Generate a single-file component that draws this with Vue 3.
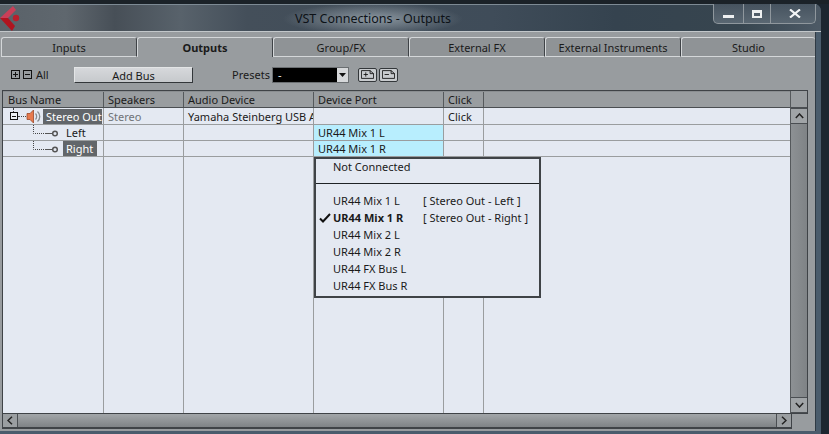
<script setup>
const tabs = ['Inputs', 'Outputs', 'Group/FX', 'External FX', 'External Instruments', 'Studio']
const headers = ['Bus Name', 'Speakers', 'Audio Device', 'Device Port', 'Click', '']
const ports = [
  { name: 'UR44 Mix 1 L', note: '[ Stereo Out - Left ]' },
  { name: 'UR44 Mix 1 R', note: '[ Stereo Out - Right ]', checked: true },
  { name: 'UR44 Mix 2 L' },
  { name: 'UR44 Mix 2 R' },
  { name: 'UR44 FX Bus L' },
  { name: 'UR44 FX Bus R' }
]
</script>

<template>
  <div class="window">
    <div class="topstrip"></div>
    <div class="frame">
      <header class="titlebar">
        <svg class="logo" width="22" height="27" viewBox="0 0 22 27">
          <path d="M0 13 L13 1 L16 5 L8 13 Z" fill="#c93f58" />
          <path d="M0 13 L8 13 L15 21 L12 26 Z" fill="#b0141f" />
          <circle cx="16" cy="13" r="3.2" fill="#b81f2c" />
        </svg>
        <span class="title">VST Connections - Outputs</span>
        <div class="controls">
          <div class="ctl"><i class="min"></i></div>
          <div class="ctl"><i class="max"></i></div>
          <div class="ctl last">
            <svg width="12" height="9" viewBox="0 0 12 9"><path d="M1 0.500 L11 8.500 M11 0.500 L1 8.500" stroke="#f2f4f5" stroke-width="2.200" /></svg>
          </div>
        </div>
      </header>

      <div class="body-row">
        <main class="panel">
          <nav class="tabs">
            <div v-for="t in tabs" :key="t" class="tab" :class="{ active: t === 'Outputs' }">{{ t }}</div>
          </nav>

          <div class="toolbar">
            <span class="sq"><svg width="7" height="7" viewBox="0 0 7 7"><path d="M1 3.500H6M3.500 1V6" stroke="#111" /></svg></span>
            <span class="sq"><svg width="7" height="7" viewBox="0 0 7 7"><path d="M1 3.500H6" stroke="#111" /></svg></span>
            <span class="all">All</span>
            <button class="addbus">Add Bus</button>
            <span class="presets">Presets</span>
            <div class="combo">
              <span class="combo-val">-</span>
              <span class="combo-arrow"><svg width="7" height="4" viewBox="0 0 7 4"><path d="M0 0H7L3.500 4Z" fill="#111" /></svg></span>
            </div>
            <span class="pbtn"><svg width="15" height="10" viewBox="0 0 15 10"><path d="M.5.5H10.500L14.500 4V9.500H.5ZM10.500 .5V4H14.500M3 5H8M5.500 2.500V7.500" fill="none" stroke="#111" /></svg></span>
            <span class="pbtn"><svg width="15" height="10" viewBox="0 0 15 10"><path d="M.5.5H10.500L14.500 4V9.500H.5ZM10.500 .5V4H14.500M3 5H8" fill="none" stroke="#111" /></svg></span>
          </div>

          <section class="table">
            <div class="table-main">
              <div class="table-area">
                <div class="row head">
                  <div v-for="h in headers" :key="h" class="cell">{{ h }}</div>
                </div>
                <div class="row first">
                  <div class="cell name">
                    <span class="tree-box"><i></i></span>
                    <span class="dots"></span>
                    <svg class="speaker" width="15" height="15" viewBox="0 0 15 15">
                      <path d="M1 4.500H4L7.500 1V14L4 10.500H1Z" fill="#e87a4e" stroke="#9c4a2a" stroke-width=".8" />
                      <path d="M9.500 4.500C11 6 11 9 9.500 10.500M11.500 2.500C14.500 5 14.500 10 11.500 12.500" fill="none" stroke="#868b8f" stroke-width="1.300" />
                    </svg>
                    <span class="chip stereo">Stereo Out</span>
                  </div>
                  <div class="cell muted">Stereo</div>
                  <div class="cell">Yamaha Steinberg USB A</div>
                  <div class="cell"></div>
                  <div class="cell">Click</div>
                  <div class="cell"></div>
                </div>
                <div class="row">
                  <div class="cell name child">
                    <svg class="conn" width="28" height="16" viewBox="0 0 28 16"><path d="M.5 0V8.500H12" fill="none" stroke="#444" stroke-dasharray="1 1" /><path d="M12 8.500H19" stroke="#555" /><circle cx="22" cy="8.500" r="2.300" fill="none" stroke="#555" stroke-width="1.500" /></svg>
                    <span class="leaf">Left</span>
                  </div>
                  <div class="cell"></div><div class="cell"></div>
                  <div class="cell port">UR44 Mix 1 L</div>
                  <div class="cell"></div><div class="cell"></div>
                </div>
                <div class="row">
                  <div class="cell name child">
                    <svg class="conn" width="28" height="16" viewBox="0 0 28 16"><path d="M.5 0V8.500H12" fill="none" stroke="#444" stroke-dasharray="1 1" /><path d="M12 8.500H19" stroke="#555" /><circle cx="22" cy="8.500" r="2.300" fill="none" stroke="#555" stroke-width="1.500" /></svg>
                    <span class="chip right">Right</span>
                  </div>
                  <div class="cell"></div><div class="cell"></div>
                  <div class="cell port">UR44 Mix 1 R</div>
                  <div class="cell"></div><div class="cell"></div>
                </div>
                <div class="row filler">
                  <div class="cell" v-for="n in 6" :key="n"></div>
                </div>

                <div class="menu">
                  <div class="menu-top">Not Connected</div>
                  <div class="menu-list">
                    <div v-for="p in ports" :key="p.name" class="menu-item" :class="{ on: p.checked }">
                      <svg v-if="p.checked" class="check" width="12" height="10" viewBox="0 0 12 10"><path d="M1 5.500L4 8.500L11 1" fill="none" stroke="#111" stroke-width="2" /></svg>
                      <span class="mname">{{ p.name }}</span>
                      <span v-if="p.note" class="mnote">{{ p.note }}</span>
                    </div>
                  </div>
                </div>
              </div>
              <div class="vscroll">
                <div class="vhead"></div>
                <div class="sbtn"><svg width="9" height="6" viewBox="0 0 9 6"><path d="M.8 5L4.500 1L8.200 5" fill="none" stroke="#222" stroke-width="1.500" /></svg></div>
                <div class="vtrack"></div>
                <div class="sbtn"><svg width="9" height="6" viewBox="0 0 9 6"><path d="M.8 1L4.500 5L8.200 1" fill="none" stroke="#222" stroke-width="1.500" /></svg></div>
              </div>
            </div>
            <div class="hscroll">
              <div class="hbtn"><svg width="6" height="9" viewBox="0 0 6 9"><path d="M5 .8L1 4.500L5 8.200" fill="none" stroke="#222" stroke-width="1.500" /></svg></div>
              <div class="htrack"></div>
              <div class="hbtn end"><svg width="6" height="9" viewBox="0 0 6 9"><path d="M1 .8L5 4.500L1 8.200" fill="none" stroke="#222" stroke-width="1.500" /></svg></div>
            </div>
          </section>
        </main>
        <div class="side"></div>
      </div>
    </div>
  </div>
</template>

<style>
html, body { margin: 0; background: #1c2630; overflow: hidden; }
</style>

<style scoped>
.window {
  width: 829px;
  height: 434px;
  display: flex;
  flex-direction: column;
  overflow: hidden;
  font-family: "Noto Sans", sans-serif;
  font-size: 11px;
  color: #1a1a1a;
  background: #1c2630;
}
.topstrip { height: 4px; background: #1b2228; flex: none; }
.frame {
  width: 821px;
  flex: 1;
  min-height: 0;
  display: flex;
  flex-direction: column;
  background: #4a5c6c;
  border-radius: 0 7px 0 0;
  overflow: hidden;
}
.titlebar {
  height: 28px;
  flex: none;
  position: relative;
  display: flex;
  align-items: center;
  justify-content: center;
  padding-right: 75px;
  box-sizing: border-box;
  background:
    radial-gradient(ellipse 90px 16px at 373px 14px, rgba(165, 176, 184, .75), rgba(165, 176, 184, 0) 100%),
    linear-gradient(90deg, #5a6269 0, #5f676e 8%, #474f57 14%, #58626b 22%, #444f5a 30%, #3f4c59 60%, #35434f 75%, #37454f 90%, #4d5a66 100%);
  border-top: 1px solid #7d8a94;
  border-bottom: 1px solid #c2c7ca;
}
.logo { position: absolute; left: 0; top: 0; }
.title { color: #0d1217; font-size: 12.5px; }
.controls {
  position: absolute;
  left: 713px;
  top: -1px;
  width: 103px;
  height: 20px;
  display: flex;
  border: 1px solid #8f979d;
  border-top: 0;
  border-radius: 0 0 5px 5px;
  box-sizing: border-box;
  background: linear-gradient(#46535f, #5a6772);
}
.ctl { flex: 1; display: flex; align-items: center; justify-content: center; border-right: 1px solid #8f979d; }
.ctl:first-child { flex: none; width: 29px; }
.ctl:nth-child(2) { flex: none; width: 26px; }
.ctl.last { border-right: 0; padding-left: 3px; }
.min { display: block; width: 11px; height: 3px; background: #eef0f1; margin-top: 6px; }
.max { display: block; width: 6px; height: 3px; border: 2px solid #eef0f1; border-top-width: 3px; }

.body-row { height: 399px; flex: none; display: flex; }
.panel {
  width: 815px;
  flex: none;
  display: flex;
  flex-direction: column;
  background: #989c9f;
  box-sizing: border-box;
  padding-bottom: 2px;
}
.side { flex: 1; border-left: 1px solid #2f3a44; }

.tabs { display: flex; padding: 5px 0 0 1px; height: 25px; box-sizing: border-box; flex: none; }
.tab {
  width: 136px;
  height: 20px;
  box-sizing: border-box;
  display: flex;
  align-items: center;
  justify-content: center;
  background: #8f9396;
  border-top: 1px solid #d4d7d9;
  border-left: 1px solid #d4d7d9;
  border-right: 1px solid #3f4347;
  border-bottom: 1px solid #d4d7d9;
  border-radius: 3px 3px 0 0;
}
.tab:last-child { width: 134px; border-right: 0; }
.tab.active { background: #989c9f; border-bottom: 0; font-weight: 700; }

.toolbar { height: 33px; flex: none; display: flex; align-items: center; padding: 2px 0 0 11px; box-sizing: border-box; }
.sq { width: 9px; height: 9px; border: 1px solid #111; box-sizing: border-box; margin-right: 3px; display: flex; }
.sq svg { display: block; }
.all { margin-left: 1px; width: 38px; }
.addbus {
  width: 119px;
  height: 16px;
  padding: 0;
  background: linear-gradient(#d6d8db, #c6c9cc);
  border: 0;
  border-right: 1px solid #33373a;
  border-bottom: 1px solid #33373a;
  border-top: 1px solid #e3e5e6;
  border-left: 1px solid #e3e5e6;
  font: inherit;
  color: inherit;
}
.presets { margin-left: 39px; width: 40px; }
.combo { width: 77px; height: 16px; background: #000; border: 1px solid #6a6e71; display: flex; align-items: stretch; box-sizing: border-box; }
.combo-val { flex: 1; color: #eee; padding-left: 5px; line-height: 14px; }
.combo-arrow { width: 11px; background: #d6d8da; display: flex; align-items: center; justify-content: center; }
.pbtn { width: 19px; height: 14px; margin-left: 2px; background: #c8cbce; border: 1px solid #33373a; border-radius: 2px; display: flex; align-items: center; justify-content: center; box-sizing: border-box; }
.combo + .pbtn { margin-left: 9px; }
.pbtn svg { width: 13px; height: 9px; }

.table {
  margin-left: 2px;
  flex: 1;
  min-height: 0;
  display: flex;
  flex-direction: column;
}
.table-main {
  width: 806px;
  flex: 1;
  display: flex;
  min-height: 0;
  border: 1px solid #3f4347;
  box-sizing: border-box;
}
.table-area { flex: 1; display: flex; flex-direction: column; position: relative; min-width: 0; }
.row {
  display: grid;
  grid-template-columns: 101px 80px 130px 130px 40px 1fr;
  grid-template-rows: minmax(0, 1fr);
  height: 16px;
  background: #e4e9f2;
  border-bottom: 1px solid #9a9d9f;
  box-sizing: border-box;
  flex: none;
  line-height: 16px;
}
.row.first { height: 17px; line-height: 17px; }
.cell { border-right: 1px solid #9a9d9f; padding-left: 4px; box-sizing: border-box; white-space: nowrap; overflow: hidden; }
.cell:first-child { padding-left: 5px; }
.cell:last-child { border-right: 0; }
.muted { color: #707478; }
.head { height: 17px; background: #999da0; border-bottom: 1px solid #4a4e52; border-top: 1px solid #8a8e91; }
.head .cell { border-right-color: #55595c; }
.filler { flex: 1; border-bottom: 0; height: auto; }
.cell.name { display: flex; align-items: center; padding-left: 7px; overflow: visible; }
.tree-box { width: 8px; height: 8px; border: 1px solid #111; background: #eef1f5; flex: none; display: flex; align-items: center; justify-content: center; box-sizing: border-box; position: relative; }
.tree-box::before { content: ""; position: absolute; left: 2px; top: -5px; height: 4px; border-left: 1px dotted #444; }
.tree-box i { display: block; width: 4px; height: 1px; background: #111; }
.dots { width: 8px; border-top: 1px dotted #444; flex: none; }
.speaker { flex: none; margin-right: 2px; }
.chip { background: #62666a; color: #fff; display: block; height: 15px; line-height: 15px; box-sizing: border-box; padding: 0 0 0 3px; }
.stereo { width: 59px; }
.cell.child { padding-left: 30px; }
.conn { flex: none; }
.leaf { margin-left: 5px; }
.right { margin-left: 2px; width: 34px; }
.port { background: #b8eefe; }

.menu {
  position: absolute;
  left: 311px;
  top: 66px;
  width: 227px;
  height: 141px;
  box-sizing: border-box;
  background: #e4e9f2;
  border: 2px solid #3f4347;
}
.menu-top { height: 25px; border-bottom: 1px solid #1f2326; padding-left: 17px; line-height: 15px; box-sizing: border-box; }
.menu-list { padding-top: 8px; }
.menu-item { height: 17px; line-height: 17px; position: relative; display: flex; padding-left: 17px; }
.menu-item.on { font-weight: 700; }
.check { position: absolute; left: 3px; top: 4px; }
.mname { width: 90px; flex: none; }
.mnote { font-weight: 400; }

.vscroll { width: 17px; flex: none; display: flex; flex-direction: column; border-left: 1px solid #55595c; box-sizing: border-box; }
.vhead { height: 17px; background: #999da0; border-bottom: 1px solid #4a4e52; box-sizing: border-box; flex: none; }
.vtrack { flex: 1; background: linear-gradient(90deg, #8d9194, #7f8386); }
.sbtn { height: 16px; flex: none; background: #a0a4a7; display: flex; align-items: center; justify-content: center; border-bottom: 1px solid #4a4e52; border-top: 1px solid #4a4e52; box-sizing: border-box; }
.hscroll { width: 790px; height: 15px; flex: none; display: flex; border: 1px solid #3f4347; border-top: 0; border-bottom-width: 2px; box-sizing: border-box; }
.hbtn { width: 15px; background: #9a9ea1; display: flex; align-items: center; justify-content: center; border-right: 1px solid #4a4e52; box-sizing: border-box; flex: none; }
.hbtn.end { border-right: 0; border-left: 1px solid #4a4e52; }
.htrack { flex: 1; background: linear-gradient(#a2a6a9, #7f8386); }
</style>
